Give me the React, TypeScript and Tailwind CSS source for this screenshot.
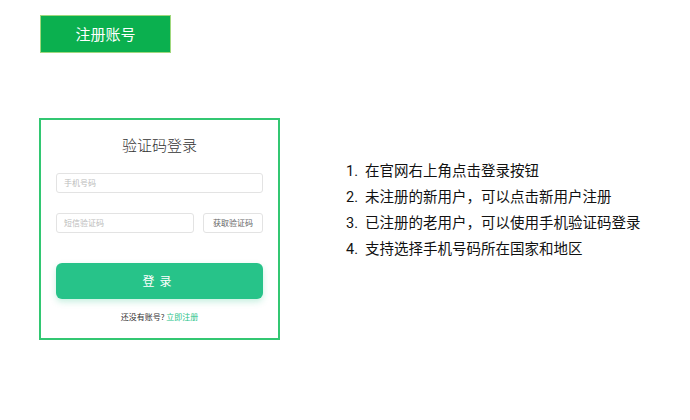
export default function App() {
  const steps = [
    "在官网右上角点击登录按钮",
    "未注册的新用户，可以点击新用户注册",
    "已注册的老用户，可以使用手机验证码登录",
    "支持选择手机号码所在国家和地区",
  ];

  return (
    <div
      className="relative h-[420px] w-[690px] overflow-hidden bg-white"
      style={{ fontFamily: '"Noto Sans CJK SC", "Noto Sans", sans-serif' }}
    >
      <div className="px-10 pt-[15px]">
        <div className="flex h-[38px] w-[131px] items-center justify-center border border-[#9fd87e] bg-[#0bb04f] text-[15px] text-white">
          注册账号
        </div>
      </div>

      <div className="mt-[65px] flex items-start">
        {/* login card */}
        <div className="ml-[39px] h-[222px] w-[241px] border-2 border-[#32c772] px-[15px] pt-[13px]">
          <div className="text-center text-[15px] font-light leading-[24px] text-[#333]">验证码登录</div>
          <div className="mt-[16px] flex h-[20px] items-center rounded-[3px] border border-[#e3e3e3] px-[7px] text-[8px] text-[#bbb]">
            手机号码
          </div>
          <div className="mt-[20px] flex gap-[9px]">
            <div className="flex h-[20px] w-[138px] items-center rounded-[3px] border border-[#e3e3e3] px-[7px] text-[8px] text-[#bbb]">
              短信验证码
            </div>
            <div className="flex h-[20px] flex-1 items-center justify-center rounded-[3px] border border-[#e3e3e3] text-[8px] text-[#666]">
              获取验证码
            </div>
          </div>
          <div className="mt-[30px] flex h-[36px] items-center justify-center rounded-[6px] bg-[#27c389] text-[12px] tracking-[5px] text-white shadow-[0_3px_6px_rgba(39,195,137,0.25)]">
            登录
          </div>
          <div className="mt-[12px] text-center text-[8px] text-[#333]">
            还没有账号? <span className="text-[#27c389]">立即注册</span>
          </div>
        </div>

        {/* steps */}
        <div
          className="ml-[66px] mt-[41px] flex flex-col text-[14.5px] leading-[26px] text-[#111]"
          style={{ fontFamily: 'Roboto, "Noto Sans CJK SC", sans-serif' }}
        >
          {steps.map((s, i) => (
            <div key={i} className="flex gap-[7px]">
              <span>{i + 1}.</span>
              <span>{s}</span>
            </div>
          ))}
        </div>
      </div>
    </div>
  );
}
